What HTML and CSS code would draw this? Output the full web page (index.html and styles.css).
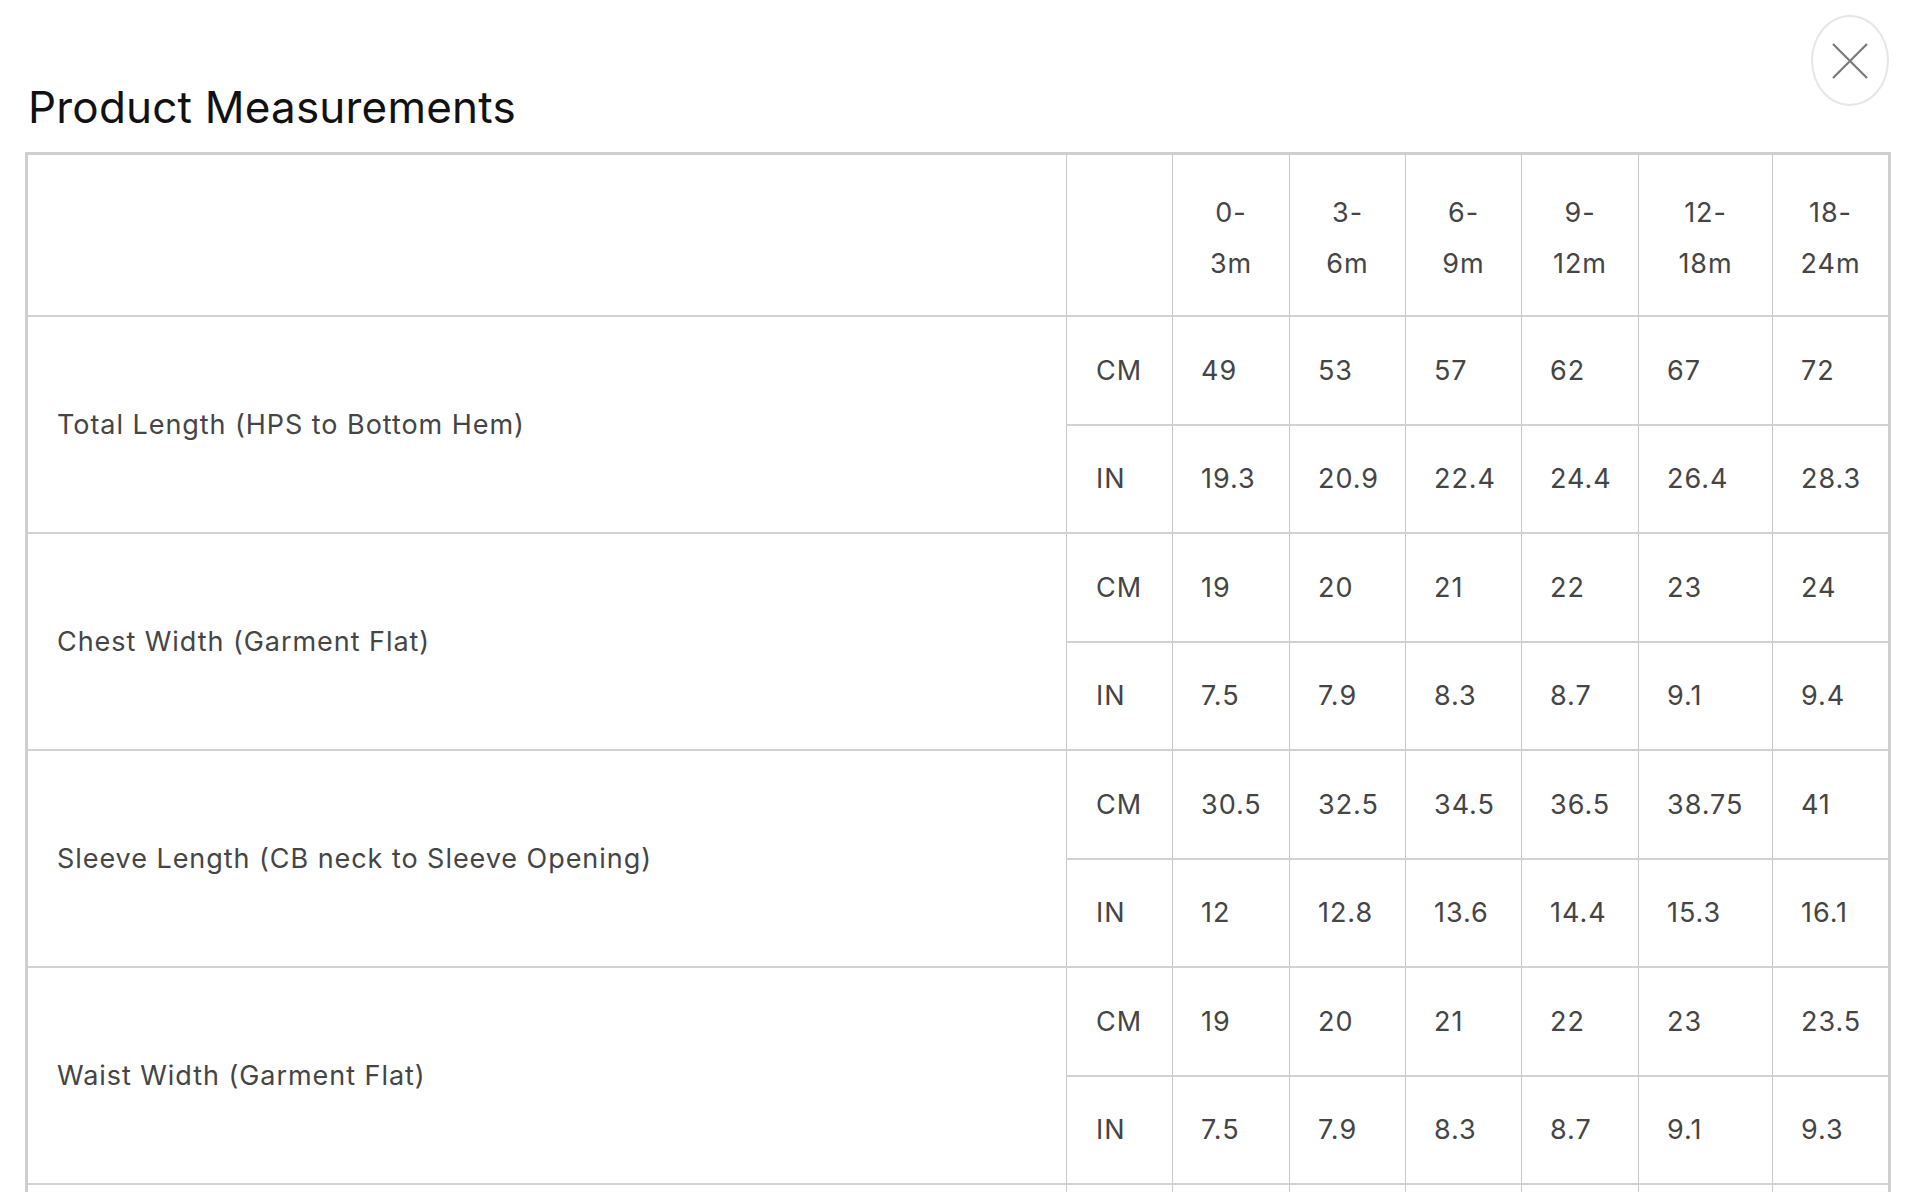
FILE: index.html
```html
<!DOCTYPE html>
<html lang="en">
<head>
<meta charset="utf-8">
<title>Product Measurements</title>
<link rel="stylesheet" href="styles.css">
</head>
<body>
<div class="modal">
  <button class="close" aria-label="Close">
    <svg viewBox="0 0 36 36" width="36" height="36"><path d="M1 1 L35 35 M35 1 L1 35" stroke="#7a7a7a" stroke-width="2.2" fill="none"/></svg>
  </button>
  <h2 class="title">Product Measurements</h2>
  <table class="sizes">
    <colgroup>
      <col class="c-label"><col class="c-unit"><col class="c-v"><col class="c-v2"><col class="c-v2"><col class="c-v"><col class="c-wide"><col class="c-last">
    </colgroup>
    <thead>
      <tr>
        <th class="blank"></th><th class="blank"></th>
        <th class="size">0-<br>3m</th><th class="size">3-<br>6m</th><th class="size">6-<br>9m</th><th class="size">9-<br>12m</th><th class="size">12-<br>18m</th><th class="size">18-<br>24m</th>
      </tr>
    </thead>
    <tbody>
      <tr class="cm"><td class="label" rowspan="2">Total Length (HPS to Bottom Hem)</td><td class="unit">CM</td><td>49</td><td>53</td><td>57</td><td>62</td><td>67</td><td>72</td></tr>
      <tr class="in"><td class="unit">IN</td><td>19.3</td><td>20.9</td><td>22.4</td><td>24.4</td><td>26.4</td><td>28.3</td></tr>
      <tr class="cm"><td class="label" rowspan="2">Chest Width (Garment Flat)</td><td class="unit">CM</td><td>19</td><td>20</td><td>21</td><td>22</td><td>23</td><td>24</td></tr>
      <tr class="in"><td class="unit">IN</td><td>7.5</td><td>7.9</td><td>8.3</td><td>8.7</td><td>9.1</td><td>9.4</td></tr>
      <tr class="cm"><td class="label" rowspan="2">Sleeve Length (CB neck to Sleeve Opening)</td><td class="unit">CM</td><td>30.5</td><td>32.5</td><td>34.5</td><td>36.5</td><td>38.75</td><td>41</td></tr>
      <tr class="in"><td class="unit">IN</td><td>12</td><td>12.8</td><td>13.6</td><td>14.4</td><td>15.3</td><td>16.1</td></tr>
      <tr class="cm"><td class="label" rowspan="2">Waist Width (Garment Flat)</td><td class="unit">CM</td><td>19</td><td>20</td><td>21</td><td>22</td><td>23</td><td>23.5</td></tr>
      <tr class="in"><td class="unit">IN</td><td>7.5</td><td>7.9</td><td>8.3</td><td>8.7</td><td>9.1</td><td>9.3</td></tr>
      <tr class="cm"><td class="label" rowspan="2"></td><td class="unit"></td><td></td><td></td><td></td><td></td><td></td><td></td></tr>
      <tr class="in"><td class="unit"></td><td></td><td></td><td></td><td></td><td></td><td></td></tr>
    </tbody>
  </table>
</div>
</body>
</html>
```
FILE: styles.css
```css
html, body {
  margin: 0;
  padding: 0;
  background: #ffffff;
}
body {
  font-family: Inter, "Liberation Sans", sans-serif;
  overflow: hidden;
}
.modal {
  position: relative;
  padding: 81px 0 0 25px;
}
.title {
  margin: 0 0 18px 3px;
  font-size: 44px;
  line-height: 53px;
  font-weight: 400;
  color: #111111;
  letter-spacing: 0.2px;
}
.close {
  position: absolute;
  top: 15px;
  right: 27px;
  width: 78px;
  height: 91px;
  border: 2px solid #e6e6e6;
  border-radius: 50%;
  background: #ffffff;
  padding: 0;
  display: flex;
  align-items: center;
  justify-content: center;
  cursor: pointer;
}
.sizes {
  border-collapse: collapse;
  table-layout: fixed;
  width: 1866px;
  border: 3px solid #cfcfcf;
  color: #454545;
  font-size: 27px;
  letter-spacing: 0.95px;
}
.c-label { width: 1040px; }
.c-unit { width: 106px; }
.c-v { width: 117px; }
.c-v2 { width: 116px; }
.c-wide { width: 134px; }
.sizes th, .sizes td {
  border-left: 1px solid #c9c9c9;
  border-right: 1px solid #c9c9c9;
  border-top: 2px solid #d2d2d2;
  border-bottom: 2px solid #d2d2d2;
  padding: 0 0 0 28px;
  text-align: left;
  vertical-align: middle;
  font-weight: 400;
  white-space: nowrap;
}
.sizes thead th {
  height: 155px;
  border-top: 3px solid #cfcfcf;
}
.sizes th.size {
  text-align: center;
  padding: 5px 0 0 0;
  line-height: 51px;
}
.sizes tbody td {
  height: 106.5px;
}
.sizes td.label {
  padding-left: 29px;
  border-left: 3px solid #cfcfcf;
}
.sizes th.blank:first-child {
  border-left: 3px solid #cfcfcf;
}
.sizes td.unit {
  padding-left: 29px;
}
```
